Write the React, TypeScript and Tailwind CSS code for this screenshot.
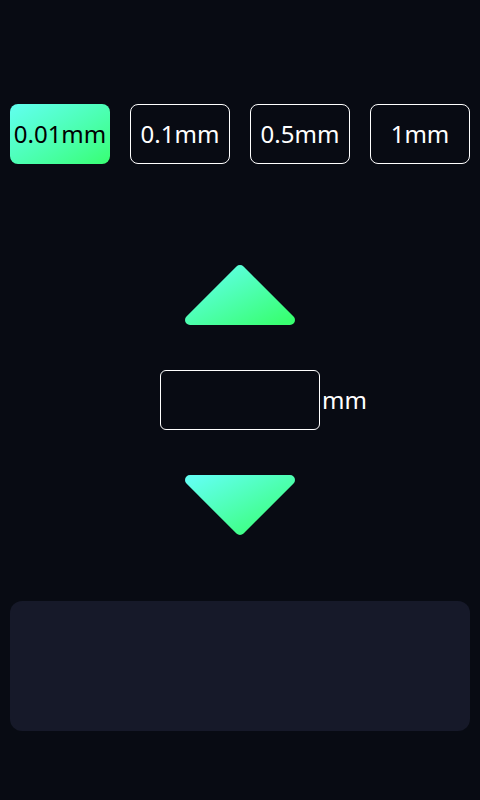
import React from "react";

function Tri({ down = false, id }: { down?: boolean; id: string }) {
  const pts = down ? "5,5 105,5 55,55" : "55,5 5,55 105,55";
  return (
    <svg width="110" height="60" viewBox="0 0 110 60">
      <defs>
        <linearGradient id={id} x1="0" y1="0" x2="1" y2="1">
          <stop offset="0" stopColor="#62fff0" />
          <stop offset="1" stopColor="#38ff70" />
        </linearGradient>
      </defs>
      <polygon points={pts} fill={`url(#${id})`} stroke={`url(#${id})`} strokeWidth="10" strokeLinejoin="round" />
    </svg>
  );
}

export default function App() {
  const opts = ["0.01mm", "0.1mm", "0.5mm", "1mm"];
  return (
    <div
      className="w-full h-[800px] bg-[#080b13] flex flex-col px-[10px] pt-[104px]"
      style={{ fontFamily: '"Noto Sans", sans-serif' }}
    >
      <div className="flex gap-[20px] h-[60px]">
        {opts.map((o, i) => (
          <div
            key={o}
            className={
              i === 0
                ? "w-[100px] h-[60px] rounded-[8px] flex items-center justify-center text-[24px] text-black bg-gradient-to-br from-[#62fff0] to-[#38ff70]"
                : "w-[100px] h-[60px] rounded-[8px] flex items-center justify-center text-[24px] text-white border border-white"
            }
          >
            {o}
          </div>
        ))}
      </div>
      <div className="mt-[101px] flex justify-center">
        <Tri id="g1" />
      </div>
      <div className="mt-[45px] grid grid-cols-[1fr_160px_1fr] items-center h-[60px]">
        <div />
        <div className="h-[60px] w-[160px] rounded-[6px] border border-white" />
        <div className="pl-[2px] text-[24px] text-white leading-none">mm</div>
      </div>
      <div className="mt-[45px] flex justify-center">
        <Tri down id="g2" />
      </div>
      <div className="mt-[66px] h-[130px] rounded-[12px] bg-[#161929]" />
    </div>
  );
}
